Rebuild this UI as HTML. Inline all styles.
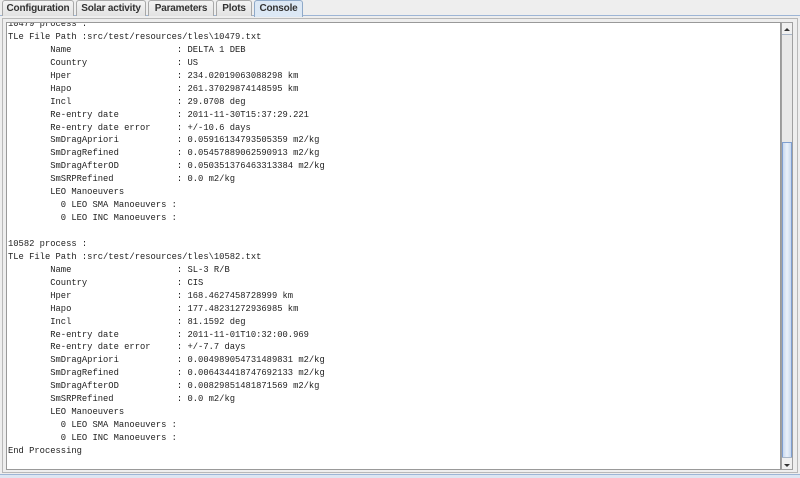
<!DOCTYPE html>
<html><head><style>
*{margin:0;padding:0;box-sizing:border-box}
body{width:800px;height:478px;background:#eeeeee;position:relative;overflow:hidden;font-family:"Liberation Sans",sans-serif}
.tab{position:absolute;top:0;height:16px;border:1px solid #a8a8a8;border-bottom:none;border-radius:3px 3px 0 0;background:linear-gradient(#f4f4f4,#e2e2e2);font-size:10px;font-weight:bold;color:#333;text-align:center;line-height:15px;white-space:nowrap;overflow:hidden;letter-spacing:-0.2px}
.sel{background:#dce8f5;border-color:#8fa9c8;height:17px}
.line{position:absolute;top:15px;left:0;width:800px;height:1px;background:#9db5d5}
.panel{position:absolute;left:2px;top:18px;width:796px;height:455px;border:1px solid #b8b8b8;background:#eeeeee}
.ta{position:absolute;left:6px;top:22px;width:775px;height:448px;background:#fff;border:1px solid #999;overflow:hidden}
pre{position:absolute;left:1px;top:-5px;font-family:"Liberation Mono",monospace;font-size:8.8px;line-height:12.94px;color:#222;white-space:pre}
.sb{position:absolute;left:781px;top:22px;width:12px;height:448px;background:#e8e8e8;border:1px solid #a0a0a0}
.btn{position:absolute;left:0;width:10px;height:12px;background:#f0f0f0;border-bottom:1px solid #a9b6c8}
.thumb{position:absolute;left:0;top:119px;width:10px;height:316px;background:linear-gradient(90deg,#c8d8ee,#eaf1fa,#c8d8ee);border:1px solid #7f9fd0}
.bot{position:absolute;left:0;top:474px;width:800px;height:4px;background:#dde6f2;border-top:1px solid #9db5d5}
</style></head><body>
<div class="line"></div>
<div class="tab" style="left:2px;width:72px">Configuration</div>
<div class="tab" style="left:76px;width:70px">Solar activity</div>
<div class="tab" style="left:148px;width:66px">Parameters</div>
<div class="tab" style="left:216px;width:36px">Plots</div>
<div class="tab sel" style="left:254px;width:49px">Console</div>
<div class="panel"></div>
<div class="ta"><pre>10479 process :
TLe File Path :src/test/resources/tles\10479.txt
        Name                    : DELTA 1 DEB
        Country                 : US
        Hper                    : 234.02019063088298 km
        Hapo                    : 261.37029874148595 km
        Incl                    : 29.0708 deg
        Re-entry date           : 2011-11-30T15:37:29.221
        Re-entry date error     : +/-10.6 days
        SmDragApriori           : 0.05916134793505359 m2/kg
        SmDragRefined           : 0.05457889062590913 m2/kg
        SmDragAfterOD           : 0.050351376463313384 m2/kg
        SmSRPRefined            : 0.0 m2/kg
        LEO Manoeuvers
          0 LEO SMA Manoeuvers :
          0 LEO INC Manoeuvers :

10582 process :
TLe File Path :src/test/resources/tles\10582.txt
        Name                    : SL-3 R/B
        Country                 : CIS
        Hper                    : 168.4627458728999 km
        Hapo                    : 177.48231272936985 km
        Incl                    : 81.1592 deg
        Re-entry date           : 2011-11-01T10:32:00.969
        Re-entry date error     : +/-7.7 days
        SmDragApriori           : 0.004989054731489831 m2/kg
        SmDragRefined           : 0.006434418747692133 m2/kg
        SmDragAfterOD           : 0.00829851481871569 m2/kg
        SmSRPRefined            : 0.0 m2/kg
        LEO Manoeuvers
          0 LEO SMA Manoeuvers :
          0 LEO INC Manoeuvers :
End Processing</pre></div>
<div class="sb">
<div class="btn" style="top:0"><svg width="10" height="12"><path d="M2 7h6L5 4z" fill="#333"/></svg></div>
<div class="thumb"></div>
<div class="btn" style="bottom:0;border-bottom:none;border-top:1px solid #a9b6c8"><svg width="10" height="12"><path d="M2 5h6L5 8z" fill="#333"/></svg></div>
</div>
<div class="bot"></div>
</body></html>
